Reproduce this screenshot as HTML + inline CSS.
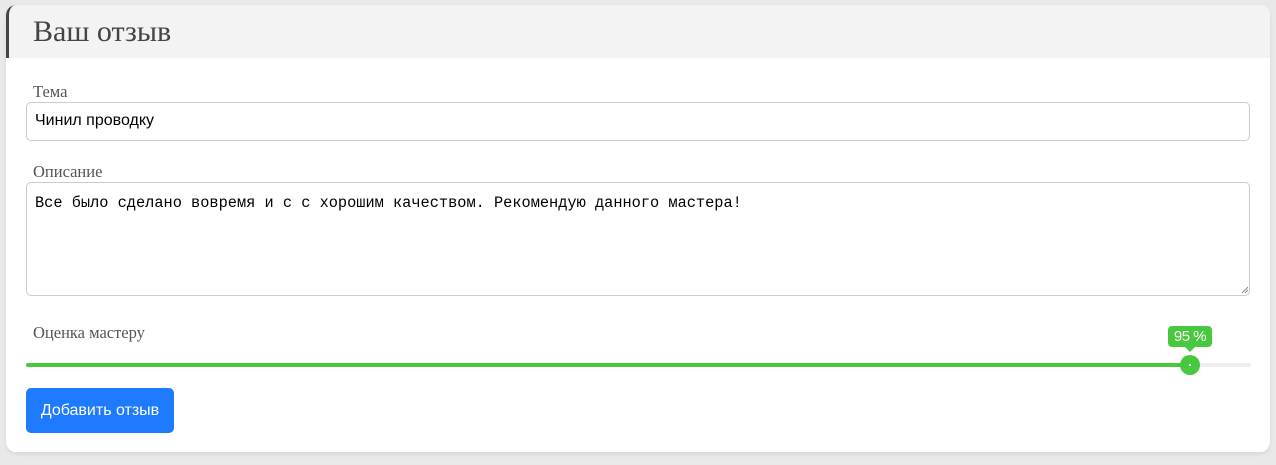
<!DOCTYPE html>
<html><head><meta charset="utf-8"><style>
body{margin:0;background:#e9e9e9;width:1276px;height:465px;overflow:hidden;font-family:"Liberation Sans",sans-serif}
.card{position:absolute;left:6px;top:5px;width:1264px;height:447px;background:#fff;border-radius:10px;overflow:hidden;box-shadow:0 2px 4px rgba(0,0,0,.08)}
.hd{height:53px;background:#f3f3f3;border-left:3px solid #444;border-top-left-radius:10px}
.hd h1{margin:0;font:400 30px "Liberation Serif",serif;color:#444;padding:10px 0 0 24px}
.lbl{position:absolute;left:27px;font:16.5px "Liberation Serif",serif;color:#555}
.inp{position:absolute;left:20px;width:1224px;border:1px solid #ccc;border-radius:5px;box-sizing:border-box}
.btn{position:absolute;left:20px;top:383px;width:148px;height:45px;background:#1e7bff;border-radius:5px;color:#fff;font-size:16px;line-height:45px;text-align:center}
</style></head><body>
<div class="card">
<div class="hd"><h1>Ваш отзыв</h1></div>
<div class="lbl" style="top:77px">Тема</div>
<div class="inp" style="top:97px;height:39px;padding:9px 8px;font-size:16px;color:#000">Чинил проводку</div>
<div class="lbl" style="top:157px">Описание</div>
<div class="inp" style="top:177px;height:114px;padding:11px 8px;font:15.3px 'Liberation Mono',monospace;color:#000">Все было сделано вовремя и с с хорошим качеством. Рекомендую данного мастера!</div>
<svg style="position:absolute;left:1235px;top:281px" width="8" height="8"><path d="M1 7L7 1M4 7L7 4" stroke="#888" stroke-width="1"/></svg>
<div class="lbl" style="top:318px">Оценка мастеру</div>
<div style="position:absolute;left:20px;top:358px;width:1225px;height:4px;background:#eee;border-radius:2px"></div>
<div style="position:absolute;left:20px;top:358px;width:1164px;height:4px;background:#47c83e;border-radius:2px"></div>
<div style="position:absolute;left:1174px;top:350px;width:20px;height:20px;background:#47c83e;border-radius:50%"></div>
<div style="position:absolute;left:1183px;top:359px;width:2px;height:2px;background:#fff"></div>
<div style="position:absolute;left:1162px;top:321px;width:44px;height:21px;background:#47c83e;border-radius:4px;color:#fff;font-size:15px;line-height:21px;text-align:center;letter-spacing:-0.5px">95 %</div>
<div style="position:absolute;left:1179px;top:342px;border:5px solid transparent;border-top-color:#47c83e"></div>
<div class="btn">Добавить отзыв</div>
</div>
</body></html>
